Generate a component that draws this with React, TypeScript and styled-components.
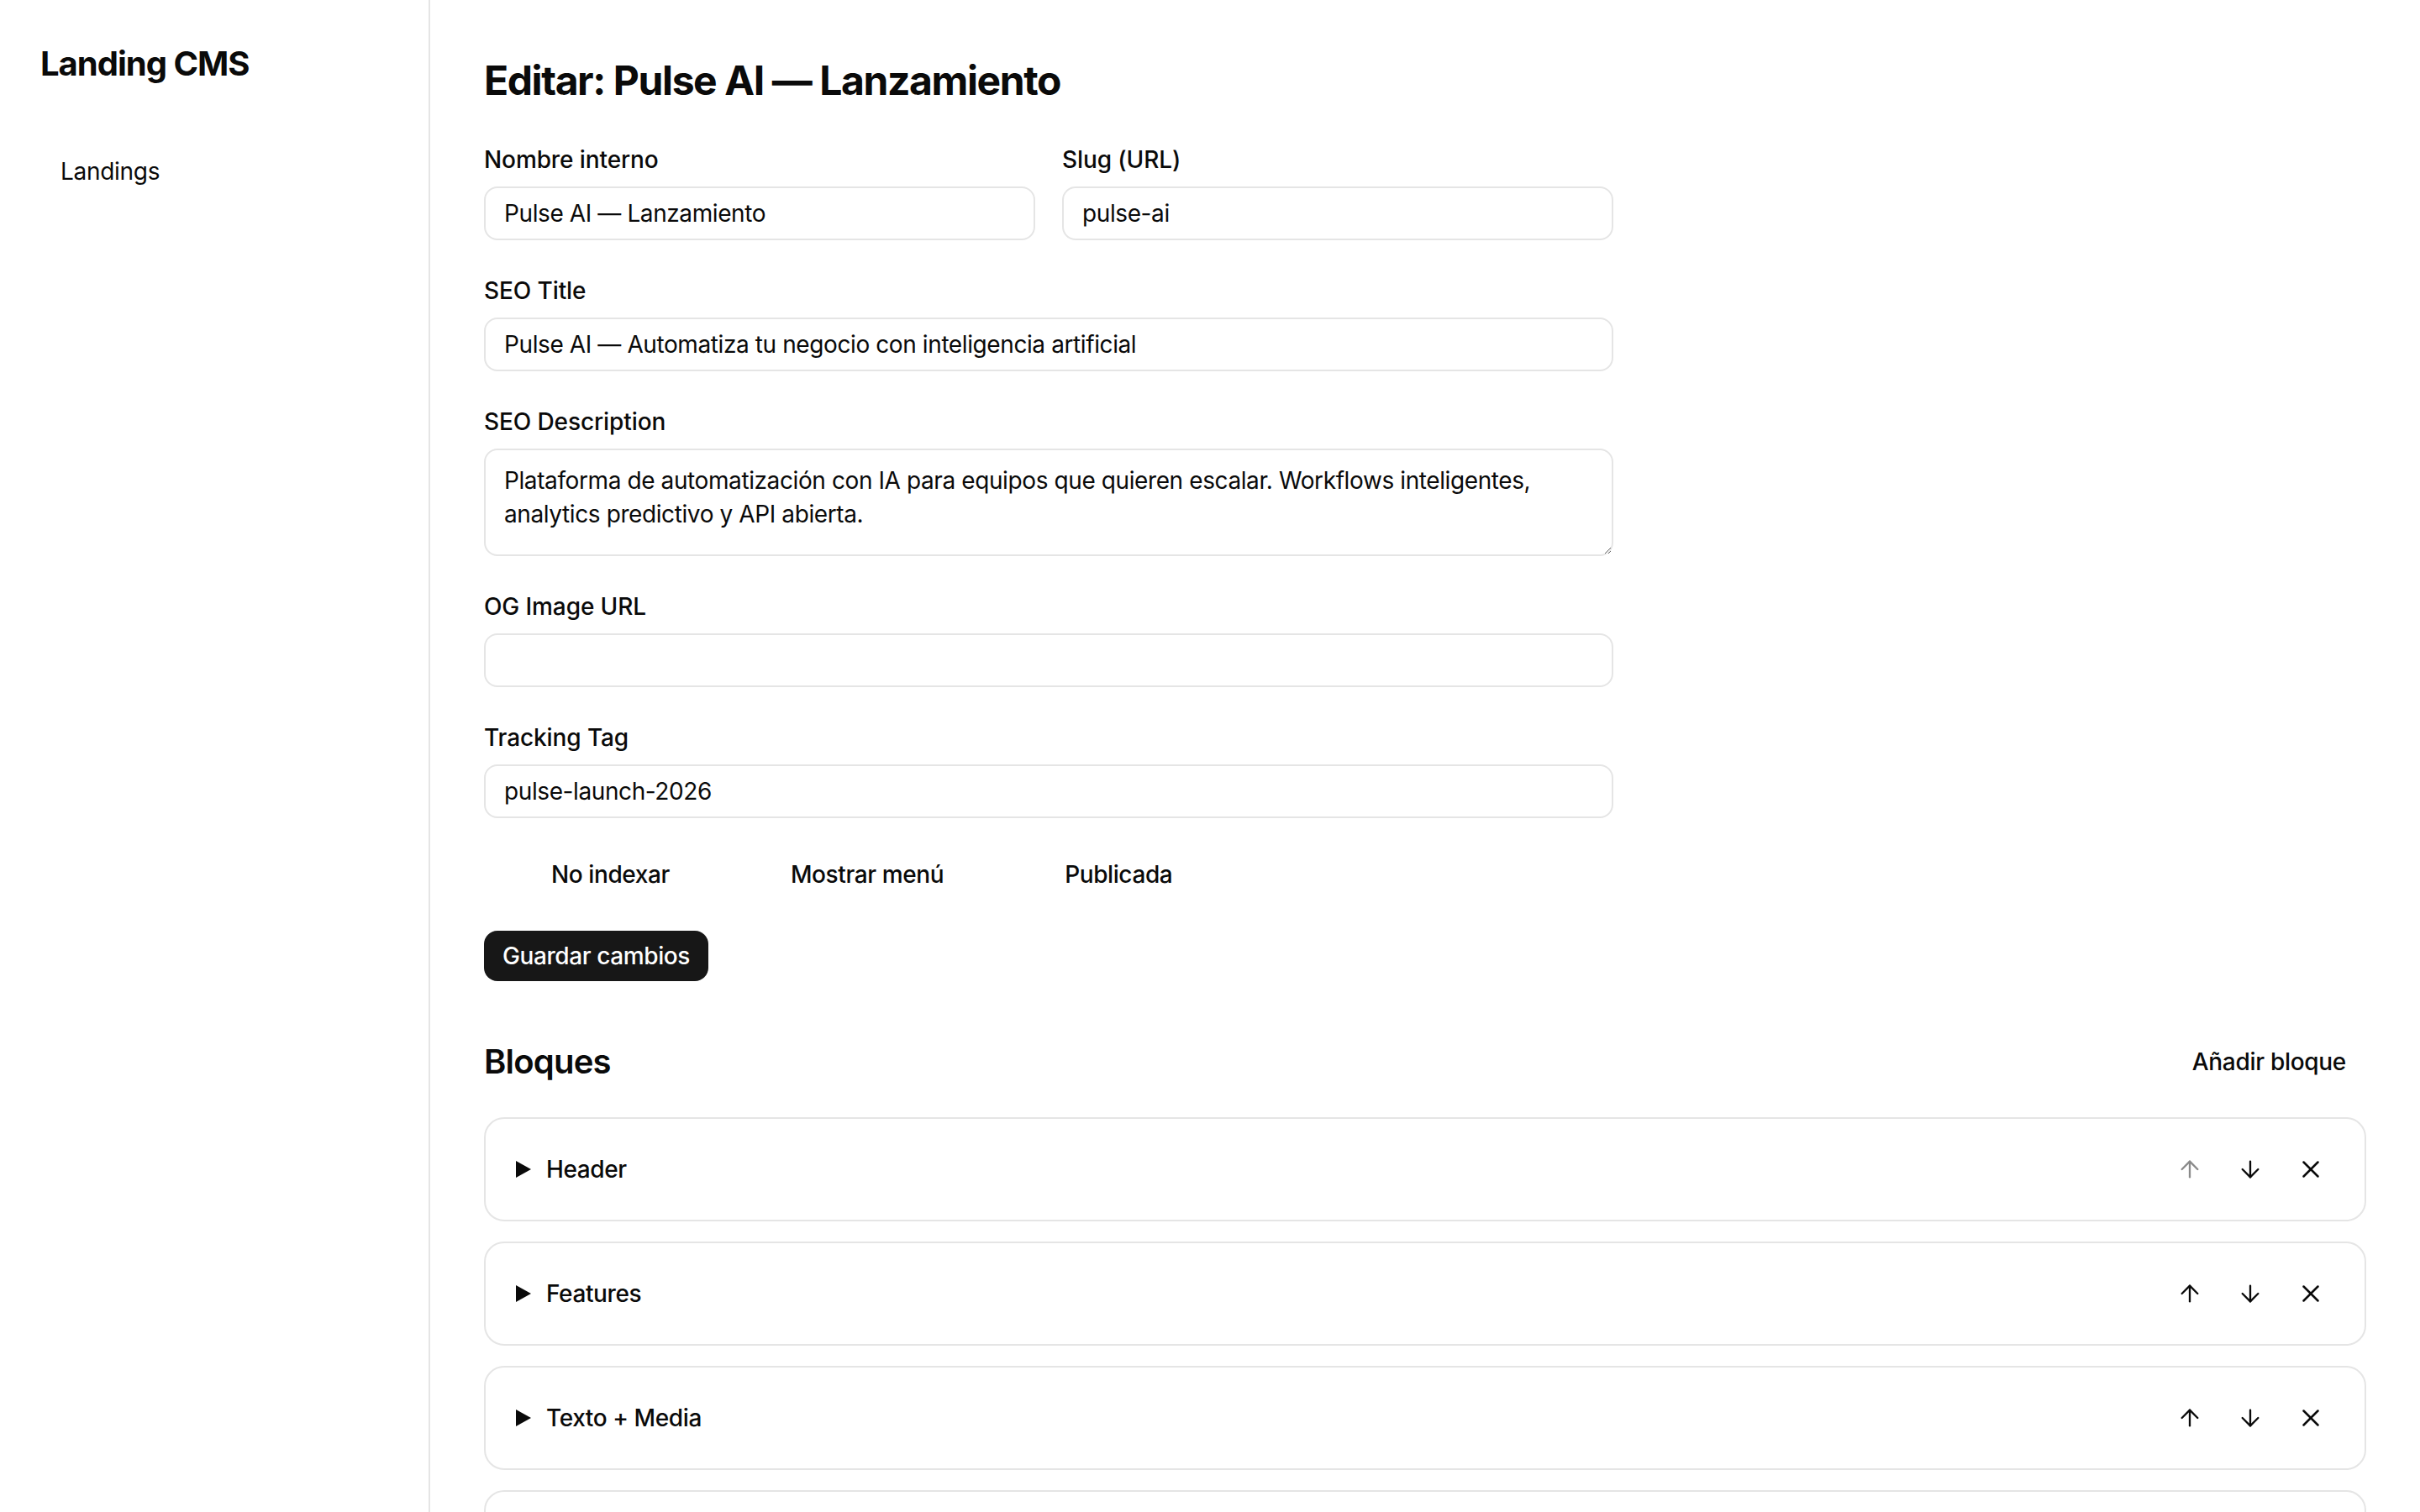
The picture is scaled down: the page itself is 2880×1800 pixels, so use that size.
import styled, { createGlobalStyle } from 'styled-components';
import { ArrowUp, ArrowDown, X } from 'lucide-react';

const GlobalStyle = createGlobalStyle`
  * { box-sizing: border-box; }
  html, body {
    margin: 0;
    padding: 0;
    background: #ffffff;
    color: #0a0a0a;
    font-family: Inter, "Noto Sans", "Liberation Sans", sans-serif;
    -webkit-font-smoothing: antialiased;
  }
`;

const blocks = [
  { id: 'header', title: 'Header' },
  { id: 'features', title: 'Features' },
  { id: 'texto-media', title: 'Texto + Media' },
  { id: 'cta', title: 'CTA' },
];

const toggles = ['No indexar', 'Mostrar menú', 'Publicada'];

export default function App() {
  return (
    <>
      <GlobalStyle />
      <Layout>
        <Sidebar>
          <Brand>Landing CMS</Brand>
          <Nav>
            <NavItem>Landings</NavItem>
          </Nav>
        </Sidebar>
        <Main>
          <Title>Editar: Pulse AI — Lanzamiento</Title>
          <Form>
            <TwoCols>
              <Field>
                <Label>Nombre interno</Label>
                <Input defaultValue="Pulse AI — Lanzamiento" />
              </Field>
              <Field>
                <Label>Slug (URL)</Label>
                <Input defaultValue="pulse-ai" />
              </Field>
            </TwoCols>
            <Field>
              <Label>SEO Title</Label>
              <Input defaultValue="Pulse AI — Automatiza tu negocio con inteligencia artificial" />
            </Field>
            <Field>
              <Label>SEO Description</Label>
              <TextArea defaultValue="Plataforma de automatización con IA para equipos que quieren escalar. Workflows inteligentes, analytics predictivo y API abierta." />
            </Field>
            <Field>
              <Label>OG Image URL</Label>
              <Input defaultValue="" />
            </Field>
            <Field>
              <Label>Tracking Tag</Label>
              <Input defaultValue="pulse-launch-2026" />
            </Field>
            <ToggleRow>
              {toggles.map(t => (
                <ToggleLabel key={t}>
                  <SwitchSlot />
                  <span>{t}</span>
                </ToggleLabel>
              ))}
            </ToggleRow>
            <div>
              <PrimaryButton type="button">Guardar cambios</PrimaryButton>
            </div>
          </Form>

          <Section>
            <SectionHeader>
              <SectionTitle>Bloques</SectionTitle>
              <GhostButton type="button">Añadir bloque</GhostButton>
            </SectionHeader>
            <BlockList>
              {blocks.map((b, i) => (
                <BlockCard key={b.id}>
                  <BlockSummary>
                    <Caret />
                    <BlockTitle>{b.title}</BlockTitle>
                    <Actions>
                      <IconButton type="button" $disabled={i === 0}>
                        <ArrowUp size={32} strokeWidth={1.75} />
                      </IconButton>
                      <IconButton type="button">
                        <ArrowDown size={32} strokeWidth={1.75} />
                      </IconButton>
                      <IconButton type="button">
                        <X size={34} strokeWidth={1.75} />
                      </IconButton>
                    </Actions>
                  </BlockSummary>
                </BlockCard>
              ))}
            </BlockList>
          </Section>
        </Main>
      </Layout>
    </>
  );
}

const Layout = styled.div`
  display: flex;
  min-height: 100vh;
`;

const Sidebar = styled.aside`
  width: 512px;
  flex-shrink: 0;
  border-right: 2px solid #e5e5e5;
  padding: 48px;
`;

const Brand = styled.div`
  font-size: 40px;
  line-height: 56px;
  font-weight: 700;
  letter-spacing: -1px;
`;

const Nav = styled.nav`
  margin-top: 64px;
  display: flex;
  flex-direction: column;
`;

const NavItem = styled.a`
  display: block;
  padding: 16px 24px;
  font-size: 28px;
  line-height: 40px;
  letter-spacing: -0.3px;
  color: #0a0a0a;
  border-radius: 12px;
  cursor: pointer;
`;

const Main = styled.main`
  flex: 1;
  min-width: 0;
  padding: 64px;
`;

const Title = styled.h1`
  margin: 0 0 42px;
  font-size: 48px;
  line-height: 64px;
  font-weight: 700;
  letter-spacing: -1.4px;
`;

const Form = styled.div`
  max-width: 1344px;
  display: flex;
  flex-direction: column;
  gap: 40px;
`;

const TwoCols = styled.div`
  display: grid;
  grid-template-columns: 1fr 1fr;
  gap: 32px;
`;

const Field = styled.label`
  display: flex;
  flex-direction: column;
  gap: 12px;
`;

const Label = styled.span`
  font-size: 28px;
  line-height: 40px;
  font-weight: 500;
  letter-spacing: -0.1px;
`;

const Input = styled.input`
  height: 64px;
  width: 100%;
  padding: 0 22px;
  border: 2px solid #e5e5e5;
  border-radius: 16px;
  font: inherit;
  font-size: 28px;
  letter-spacing: -0.4px;
  color: #0a0a0a;
  background: #fff;
  outline: none;
`;

const TextArea = styled.textarea`
  height: 128px;
  width: 100%;
  padding: 16px 22px;
  border: 2px solid #e5e5e5;
  border-radius: 16px;
  font: inherit;
  font-size: 28px;
  line-height: 40px;
  letter-spacing: -0.4px;
  color: #0a0a0a;
  background: #fff;
  outline: none;
  resize: vertical;
`;

const ToggleRow = styled.div`
  display: flex;
  align-items: center;
  gap: 64px;
  height: 54px;
`;

const ToggleLabel = styled.label`
  display: flex;
  align-items: center;
  gap: 16px;
  font-size: 28px;
  line-height: 40px;
  font-weight: 500;
  letter-spacing: -0.4px;
`;

const SwitchSlot = styled.span`
  display: inline-block;
  width: 64px;
  height: 36px;
`;

const PrimaryButton = styled.button`
  height: 60px;
  padding: 0 22px;
  border: none;
  border-radius: 16px;
  background: #171717;
  color: #fff;
  font: inherit;
  font-size: 28px;
  font-weight: 500;
  letter-spacing: -0.4px;
  cursor: pointer;
`;

const Section = styled.section`
  margin-top: 64px;
`;

const SectionHeader = styled.div`
  display: flex;
  align-items: center;
  justify-content: space-between;
  height: 64px;
  margin-bottom: 34px;
`;

const SectionTitle = styled.h2`
  margin: 0;
  font-size: 40px;
  line-height: 56px;
  font-weight: 600;
  letter-spacing: -0.8px;
`;

const GhostButton = styled.button`
  height: 64px;
  padding: 0 24px;
  border: none;
  background: transparent;
  color: #0a0a0a;
  font: inherit;
  font-size: 28px;
  font-weight: 500;
  letter-spacing: -0.3px;
  cursor: pointer;
`;

const BlockList = styled.div`
  display: flex;
  flex-direction: column;
  gap: 24px;
`;

const BlockCard = styled.div`
  border: 2px solid #e5e5e5;
  border-radius: 24px;
  background: #fff;
`;

const BlockSummary = styled.div`
  display: flex;
  align-items: center;
  padding: 28px 32px 28px 36px;
`;

const Caret = styled.span`
  width: 0;
  height: 0;
  border-top: 10px solid transparent;
  border-bottom: 10px solid transparent;
  border-left: 18px solid #0a0a0a;
  margin-right: 18px;
`;

const BlockTitle = styled.span`
  flex: 1;
  font-size: 28px;
  line-height: 40px;
  font-weight: 500;
  letter-spacing: -0.4px;
`;

const Actions = styled.div`
  display: flex;
  align-items: center;
  gap: 8px;
`;

const IconButton = styled.button<{ $disabled?: boolean }>`
  width: 64px;
  height: 64px;
  display: flex;
  align-items: center;
  justify-content: center;
  padding: 0;
  border: none;
  border-radius: 12px;
  background: transparent;
  color: ${p => (p.$disabled ? '#8a8a8a' : '#0a0a0a')};
  cursor: ${p => (p.$disabled ? 'default' : 'pointer')};
`;
